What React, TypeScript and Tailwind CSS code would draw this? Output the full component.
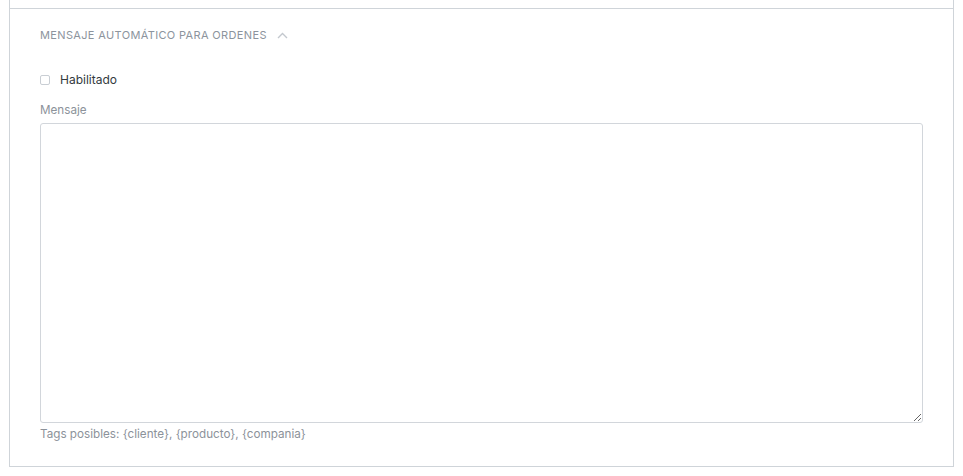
import { useState } from "react";

export default function App() {
  const [enabled, setEnabled] = useState(false);

  return (
    <div className="min-h-[476px] bg-white font-['Inter','Noto_Sans',sans-serif]">
      <div className="ml-[9px] w-[945px]">
        <div className="h-[8px] border-x border-[#cfd4d9]" />
        <section className="border border-[#cfd4d9] px-[30px] pb-[24px] pt-[18px]">
          <button
            type="button"
            className="flex items-center gap-[10px] text-[11px] leading-4 tracking-[0.35px] text-[#8c949d]"
          >
            <span>MENSAJE AUTOMÁTICO PARA ORDENES</span>
            <svg width="11" height="7" viewBox="0 0 11 7" fill="none" aria-hidden>
              <path d="M1 6 L5.5 1.5 L10 6" stroke="#c3c8ce" strokeWidth="1.4" />
            </svg>
          </button>

          <label className="mt-[27px] flex h-5 items-center gap-[10px] text-[12px] text-[#333a40]">
            <input
              type="checkbox"
              checked={enabled}
              onChange={(e) => setEnabled(e.target.checked)}
              className="h-[10px] w-[10px] appearance-none rounded-[2px] border border-[#c9ced4] bg-white checked:bg-[#4b8bf5]"
            />
            Habilitado
          </label>

          <div className="mt-[11px] text-[11.7px] leading-[18px] text-[#8c929a]">Mensaje</div>
          <textarea className="mt-[4px] block h-[300px] w-full rounded-[3px] border border-[#d2d6db] bg-white p-2 text-[13px] outline-none" />
          <p className="mt-[3px] text-[11.7px] leading-4 text-[#8c929a]">
            Tags posibles: {"{cliente}"}, {"{producto}"}, {"{compania}"}
          </p>
        </section>
      </div>
    </div>
  );
}
